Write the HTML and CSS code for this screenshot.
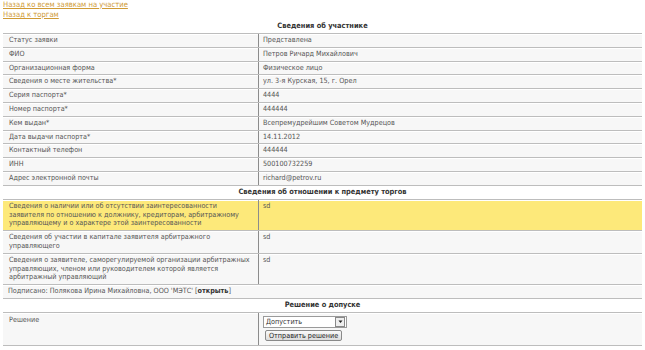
FILE: index.html
```html
<!DOCTYPE html>
<html lang="ru">
<head>
<meta charset="utf-8">
<title>Сведения об участнике</title>
<link rel="stylesheet" href="styles.css">
</head>
<body>
<div class="links">
  <a href="#">Назад ко всем заявкам на участие</a>
  <a href="#">Назад к торгам</a>
</div>
<table class="info">
  <tr class="head"><th colspan="2">Сведения об участнике</th></tr>
  <tr><td class="k">Статус заявки</td><td class="v">Представлена</td></tr>
  <tr><td class="k">ФИО</td><td class="v">Петров Ричард Михайлович</td></tr>
  <tr><td class="k">Организационная форма</td><td class="v">Физическое лицо</td></tr>
  <tr><td class="k">Сведения о месте жительства*</td><td class="v">ул. 3-я Курская, 15, г. Орел</td></tr>
  <tr><td class="k">Серия паспорта*</td><td class="v">4444</td></tr>
  <tr><td class="k">Номер паспорта*</td><td class="v">444444</td></tr>
  <tr><td class="k">Кем выдан*</td><td class="v">Всепремудрейшим Советом Мудрецов</td></tr>
  <tr><td class="k">Дата выдачи паспорта*</td><td class="v">14.11.2012</td></tr>
  <tr><td class="k">Контактный телефон</td><td class="v">444444</td></tr>
  <tr><td class="k">ИНН</td><td class="v">500100732259</td></tr>
  <tr><td class="k">Адрес электронной почты</td><td class="v">richard@petrov.ru</td></tr>
  <tr class="head"><th colspan="2">Сведения об отношении к предмету торгов</th></tr>
  <tr class="hl"><td class="k">Сведения о наличии или об отсутствии заинтересованности заявителя по отношению к должнику, кредиторам, арбитражному управляющему и о характере этой заинтересованности</td><td class="v">sd</td></tr>
  <tr><td class="k">Сведения об участии в капитале заявителя арбитражного управляющего</td><td class="v">sd</td></tr>
  <tr><td class="k">Сведения о заявителе, саморегулируемой организации арбитражных управляющих, членом или руководителем которой является арбитражный управляющий</td><td class="v">sd</td></tr>
  <tr><td colspan="2" class="sign">Подписано: Полякова Ирина Михайловна, ООО 'МЭТС' [<b>открыть</b>]</td></tr>
  <tr class="head"><th colspan="2">Решение о допуске</th></tr>
  <tr class="last"><td class="k">Решение</td><td class="v">
    <div class="sel"><span>Допустить</span><i class="arr"><svg width="7" height="7" viewBox="0 0 7 7"><path d="M1.5 2.5h4L3.5 5z" fill="#222"/></svg></i></div>
    <button class="btn">Отправить решение</button>
  </td></tr>
</table>
</body>
</html>
```

FILE: styles.css
```css
html, body {
  margin: 0;
  padding: 0;
  background: #fff;
}
body {
  font-family: "DejaVu Sans Condensed", "DejaVu Sans", sans-serif;
  font-size: 7.2px;
  color: #555;
  padding: 0 3px;
}
.links {
  display: flex;
  flex-direction: column;
  align-items: flex-start;
  line-height: 10px;
  font-size: 7.6px;
}
.links a {
  color: #cf9a35;
  text-decoration: underline;
}
.info {
  width: 639px;
  border-collapse: collapse;
  margin-top: 0;
}
.info th {
  font-weight: bold;
  font-size: 7.4px;
  color: #333;
  text-align: center;
  line-height: 9px;
  padding: 1px 0 3px;
  background: #fff;
}
.info td {
  line-height: 8.8px;
  padding: 2px 5px 2px;
  vertical-align: top;
  background: #f7f7f7;
  border-top: 1px solid #bdbdbd;
  border-bottom: 1px solid #bdbdbd;
  box-shadow: inset 0 1px 0 #fff;
}
.info td.k {
  width: 244px;
  padding-left: 6px;
}
.info td.v {
  border-left: 1px solid #8c8c8c;
  padding-left: 4px;
}
.info tr.hl td {
  background: #fde97a;
}
.info td.sign b {
  color: #333;
}
.info tr.last td {
  padding-top: 3px;
  padding-bottom: 4px;
}
.sel {
  display: flex;
  align-items: center;
  justify-content: space-between;
  width: 80px;
  height: 10px;
  border: 1px solid #9a9a9a;
  background: #fff;
  color: #333;
  padding-left: 2px;
  margin-bottom: 2px;
}
.arr {
  display: flex;
  align-items: center;
  justify-content: center;
  width: 8px;
  height: 8px;
  border: 1px solid #888;
  background: #eee;
  margin-right: 1px;
}
.btn {
  display: block;
  font-family: inherit;
  font-size: 7.2px;
  line-height: 9px;
  color: #222;
  padding: 0 3px;
  margin-left: 2px;
  height: 11px;
  border: 1px solid #8a8a8a;
  border-radius: 2px;
  background: linear-gradient(#fafafa, #dcdcdc);
}
```
